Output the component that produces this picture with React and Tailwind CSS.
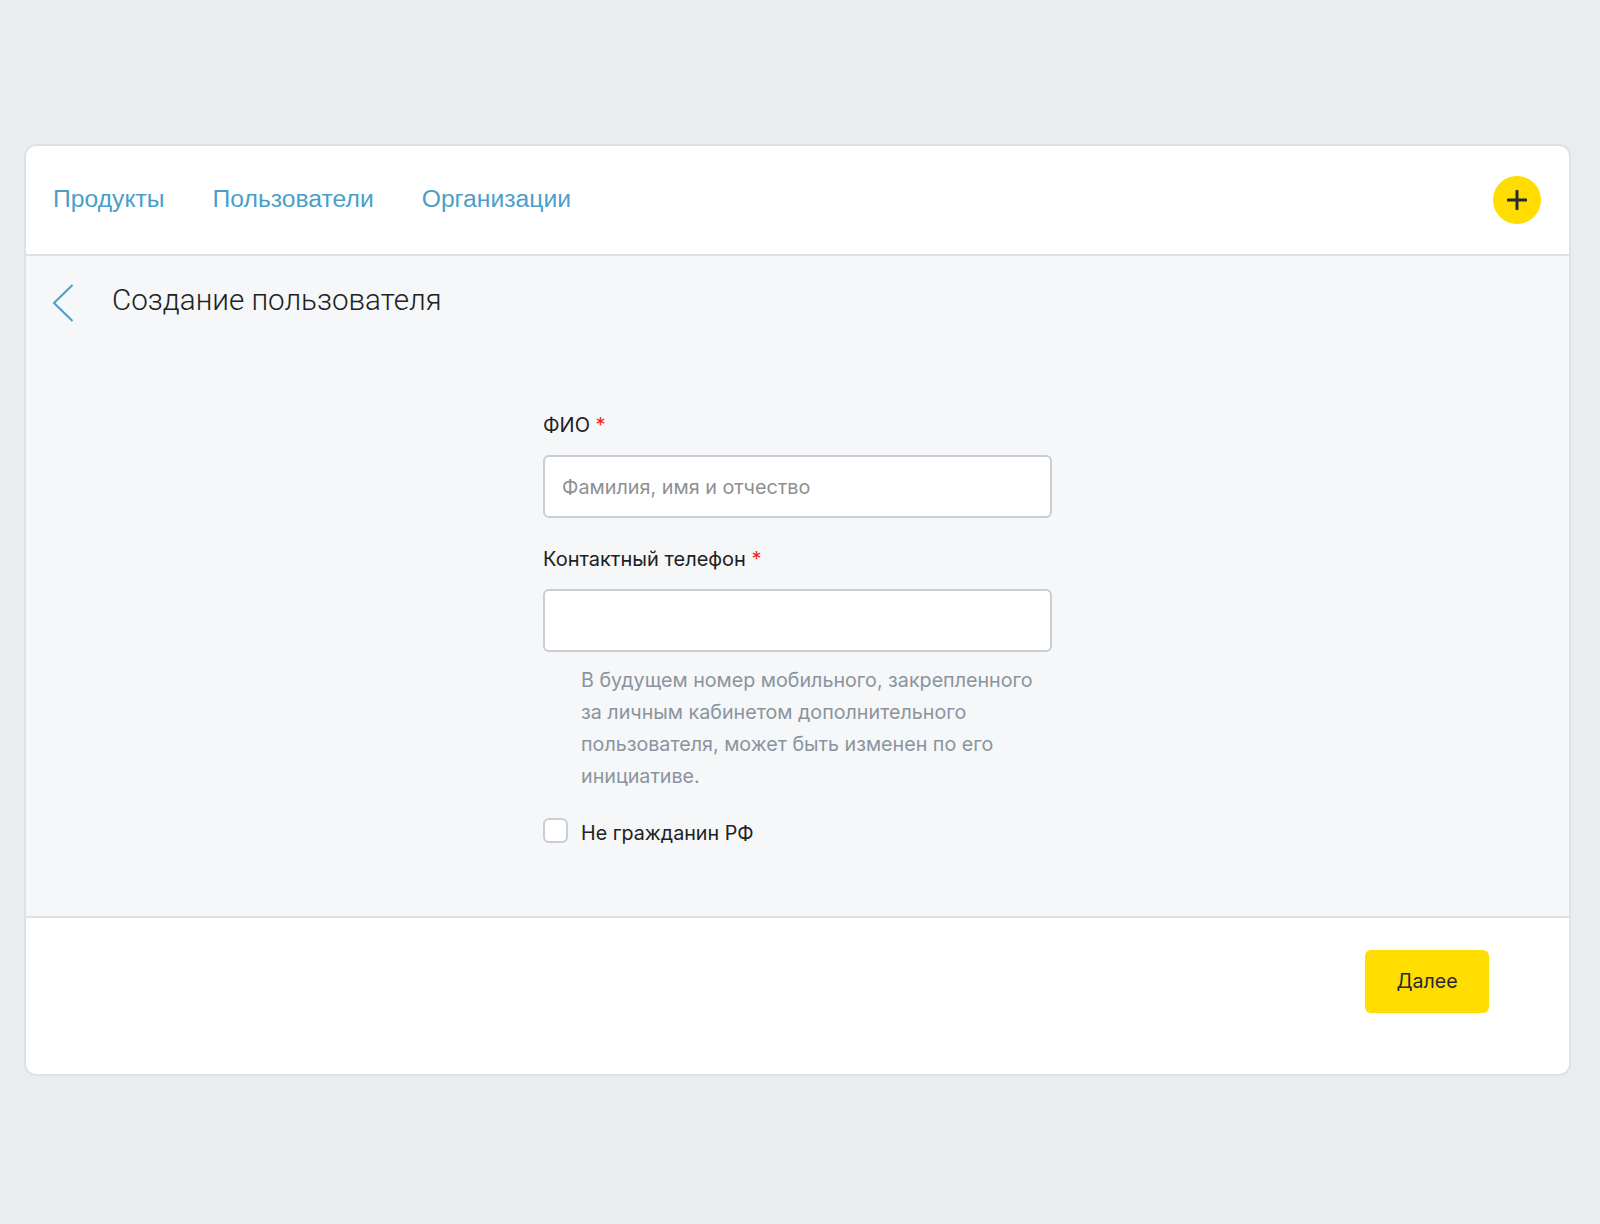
const navItems = ["Продукты", "Пользователи", "Организации"];

const Label = ({ children }) => (
  <div className="text-[20px] leading-[26px] text-[#212121]">
    {children} <span className="text-[#f52222]">*</span>
  </div>
);

const Field = ({ placeholder }) => (
  <input
    placeholder={placeholder}
    className="mt-[17px] block h-[63px] w-full rounded-[6px] border-2 border-[#c8ced3] bg-white px-[17px] text-[19.8px] text-[#212121] outline-none placeholder:text-[#8f8f8f]"
  />
);

export default function App() {
  return (
    <div className="h-[1224px] bg-[#e9edf0] px-[24px] pt-[144px] font-['Inter',sans-serif]">
      <div className="h-[932px] w-[1547px] overflow-hidden rounded-[12px] border-2 border-[#dfe2e5] bg-white">
        <div className="flex h-[110px] items-center justify-between border-b-2 border-[#dfe2e5] pb-[3px] pl-[27px] pr-[28px]">
          <nav className="flex gap-[48px] font-['Liberation_Sans',sans-serif] text-[24.7px] text-[#4a9fc9]">
            {navItems.map((item) => (
              <a key={item}>{item}</a>
            ))}
          </nav>
          <button className="mt-[3px] flex h-[48px] w-[48px] items-center justify-center rounded-full bg-[#ffdd00]">
            <svg width="20" height="20" viewBox="0 0 20 20" fill="none" stroke="#252a36" strokeWidth="3" strokeLinecap="round">
              <path d="M10 1v18M1 10h18" />
            </svg>
          </button>
        </div>

        <div className="h-[660px] bg-[#f5f7f9]">
          <div className="flex items-start pl-[26px] pt-[28px]">
            <svg width="22" height="38" viewBox="0 0 22 38" fill="none" stroke="#4a9fc9" strokeWidth="2">
              <path d="M20.5 1 2 19l18.5 18" />
            </svg>
            <h1 className="ml-[38px] font-['Roboto',sans-serif] text-[29.6px] font-light leading-[32px] text-[#212121]">
              Создание пользователя
            </h1>
          </div>

          <div className="ml-[517px] mt-[90px] w-[509px]">
            <Label>ФИО</Label>
            <Field placeholder="Фамилия, имя и отчество" />

            <div className="mt-[28px]">
              <Label>Контактный телефон</Label>
              <Field />
            </div>

            <p className="mt-[12px] pl-[38px] text-[19.7px] leading-[32px] text-[#8a949e]">
              В будущем номер мобильного, закрепленного
              <br />
              за личным кабинетом дополнительного
              <br />
              пользователя, может быть изменен по его
              <br />
              инициативе.
            </p>

            <label className="mt-[26px] flex items-start gap-[13px] text-[19.7px] leading-[26px] text-[#212121]">
              <span className="h-[25px] w-[25px] rounded-[6px] border-2 border-[#c8ced3] bg-white" />
              <span className="pt-[2px]">Не гражданин РФ</span>
            </label>
          </div>
        </div>

        <div className="flex justify-end border-t-2 border-[#dfe2e5] pr-[80px] pt-[32px]">
          <button className="h-[63px] w-[124px] rounded-[6px] bg-[#ffdd00] text-[19.6px] text-[#252a36]">
            Далее
          </button>
        </div>
      </div>
    </div>
  );
}
